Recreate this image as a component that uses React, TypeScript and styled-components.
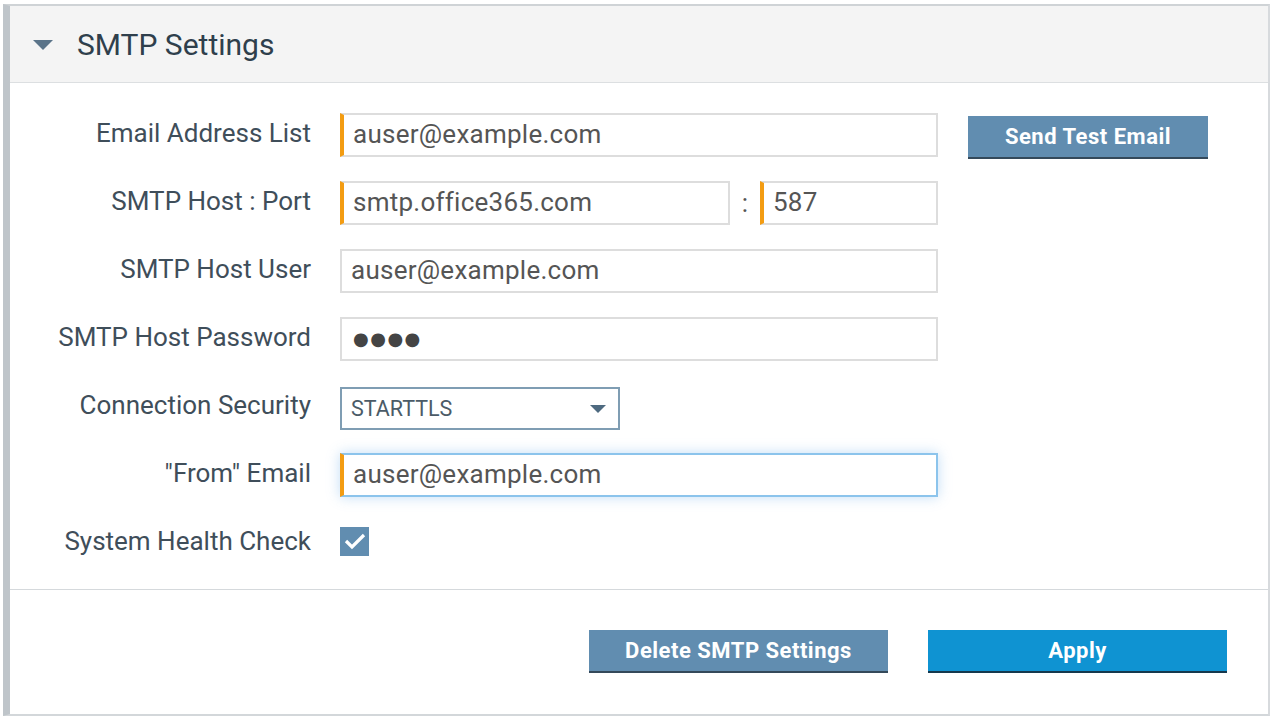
import React from 'react'
import styled, { createGlobalStyle } from 'styled-components'

const GlobalStyle = createGlobalStyle`
  html, body {
    margin: 0;
    padding: 0;
    background: #ffffff;
    font-family: Roboto, "Open Sans", sans-serif;
  }
`

const Panel = styled.section`
  box-sizing: border-box;
  margin: 4px 0 0 3px;
  width: 1267px;
  height: 712px;
  border-left: 7px solid #bfc5ca;
  border-top: 2px solid #cfd3d6;
  border-right: 2px solid #d7dadd;
  border-bottom: 2px solid #d3d7da;
  display: flex;
  flex-direction: column;
  background: #fff;
`

const Header = styled.header`
  height: 76px;
  flex: none;
  background: #f4f4f4;
  border-bottom: 1px solid #dcdfe1;
  display: flex;
  align-items: center;
  padding-left: 23px;
  gap: 24px;
`

const Caret = styled.span`
  width: 0;
  height: 0;
  border-left: 10px solid transparent;
  border-right: 10px solid transparent;
  border-top: 10px solid #5b7489;
  margin-top: 2px;
`

const Title = styled.h2`
  margin: 0;
  font-size: 30px;
  font-weight: 400;
  color: #2f3f4c;
`

const Form = styled.div`
  flex: none;
  padding: 30px 0 24px;
  display: flex;
  flex-direction: column;
  gap: 24px;
  border-bottom: 1px solid #d5d9dc;
`

const Row = styled.div`
  display: flex;
  align-items: center;
  height: 44px;
`

const Label = styled.label`
  width: 301px;
  flex: none;
  text-align: right;
  padding-right: 29px;
  font-size: 26px;
  color: #3f4e5a;
  margin-top: -5px;
`

const Input = styled.input<{ $required?: boolean; $width: number; $focused?: boolean }>`
  box-sizing: border-box;
  width: ${p => p.$width}px;
  height: 44px;
  font-family: Roboto, "Open Sans", sans-serif;
  font-size: 26px;
  letter-spacing: 0.25px;
  color: #555;
  padding: 0 10px 2px 9px;
  background: #fff;
  border: 2px solid ${p => (p.$focused ? '#8cc4ec' : '#dddddd')};
  border-left: ${p => (p.$required ? '4px solid #f39c12' : `2px solid ${p.$focused ? '#8cc4ec' : '#dddddd'}`)};
  box-shadow: ${p => (p.$focused ? '0 0 12px rgba(120, 180, 235, 0.45)' : 'none')};
  outline: none;
`

const Secret = styled(Input)`
  font-family: "DejaVu Sans", sans-serif;
  font-size: 18px;
  letter-spacing: 1.5px;
  color: #444;
  padding-left: 11px;
`

const Colon = styled.span`
  width: 30px;
  text-align: center;
  font-size: 26px;
  color: #555;
`

const Button = styled.button<{ $variant?: 'primary' | 'secondary'; $width: number }>`
  box-sizing: border-box;
  width: ${p => p.$width}px;
  height: 43px;
  border: none;
  border-bottom: 2px solid ${p => (p.$variant === 'primary' ? '#15384d' : '#34495a')};
  background: ${p => (p.$variant === 'primary' ? '#0f93d2' : '#618db0')};
  color: #fff;
  font-family: Roboto, "Open Sans", sans-serif;
  font-weight: 700;
  font-size: 22px;
  letter-spacing: 0.5px;
  cursor: pointer;
  padding: 0;
`

const SideButton = styled(Button)`
  margin-left: 30px;
  margin-top: 2px;
  margin-bottom: -2px;
`

const SelectBox = styled.div`
  box-sizing: border-box;
  width: 280px;
  height: 43px;
  border: 2px solid #7f9db3;
  display: flex;
  align-items: center;
  justify-content: space-between;
  padding: 0 12px 0 9px;
  font-size: 21.5px;
  color: #4b5b67;
  margin-top: 2px;
`

const SelectCaret = styled.span`
  width: 0;
  height: 0;
  border-left: 8px solid transparent;
  border-right: 8px solid transparent;
  border-top: 8px solid #4e6a80;
  margin-top: 2px;
`

const Check = styled.span`
  width: 29px;
  height: 29px;
  background: #618db0;
  display: inline-flex;
  align-items: center;
  justify-content: center;
  margin-top: -4px;
`

const Footer = styled.footer`
  flex: 1;
  display: flex;
  justify-content: flex-end;
  align-items: flex-start;
  padding: 40px 41px 0 0;
  gap: 40px;
`

export default function App() {
  return (
    <>
      <GlobalStyle />
      <Panel>
        <Header>
          <Caret />
          <Title>SMTP Settings</Title>
        </Header>
        <Form>
          <Row>
            <Label>Email Address List</Label>
            <Input $required $width={598} defaultValue="auser@example.com" />
            <SideButton $width={240}>Send Test Email</SideButton>
          </Row>
          <Row>
            <Label>SMTP Host : Port</Label>
            <Input $required $width={390} defaultValue="smtp.office365.com" />
            <Colon>:</Colon>
            <Input $required $width={178} defaultValue="587" />
          </Row>
          <Row>
            <Label>SMTP Host User</Label>
            <Input $width={598} defaultValue="auser@example.com" />
          </Row>
          <Row>
            <Label>SMTP Host Password</Label>
            <Secret $width={598} readOnly value="●●●●" />
          </Row>
          <Row>
            <Label>Connection Security</Label>
            <SelectBox>
              <span>STARTTLS</span>
              <SelectCaret />
            </SelectBox>
          </Row>
          <Row>
            <Label>"From" Email</Label>
            <Input $required $focused $width={598} defaultValue="auser@example.com" />
          </Row>
          <Row>
            <Label>System Health Check</Label>
            <Check>
              <svg width="22" height="18" viewBox="0 0 22 18">
                <path d="M2 9 L8 15 L20 3" fill="none" stroke="#fff" strokeWidth="3.2" />
              </svg>
            </Check>
          </Row>
        </Form>
        <Footer>
          <Button $width={299}>Delete SMTP Settings</Button>
          <Button $variant="primary" $width={299}>Apply</Button>
        </Footer>
      </Panel>
    </>
  )
}
